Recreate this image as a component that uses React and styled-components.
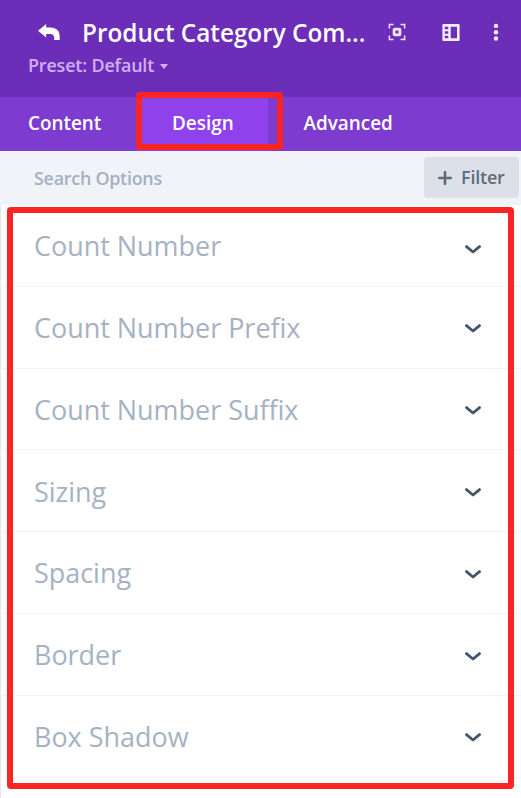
import React from 'react'
import styled, { createGlobalStyle } from 'styled-components'

const groups = [
    'Count Number',
    'Count Number Prefix',
    'Count Number Suffix',
    'Sizing',
    'Spacing',
    'Border',
    'Box Shadow',
]

const App = () => {
    return (
        <Panel>
            <GlobalStyle />
            <Header>
                <TitleRow>
                    <BackIcon viewBox="0 0 22 16">
                        <path d="M0 6.8 8.2 0V3.5H12.5C18.5 3.5 21.7 7 21.7 12.5V16H16.2V14C16.2 11.3 14.6 9.9 12 9.9H8.2V13.6Z" />
                    </BackIcon>
                    <Title>Product Category Com...</Title>
                    <Actions>
                        <FocusIcon viewBox="0 0 18 18">
                            <path d="M1.4 5.4V1.4H5.4M12.6 1.4H16.6V5.4M16.6 12.6V16.6H12.6M5.4 16.6H1.4V12.6" strokeWidth="1.5" />
                            <rect x="6.1" y="6.1" width="5.8" height="5.8" rx="0.6" strokeWidth="2.8" />
                        </FocusIcon>
                        <LayoutIcon viewBox="0 0 18 17">
                            <path
                                fillRule="evenodd"
                                d="M1.3 0H16.7Q17.6 0 17.6 1V16Q17.6 17 16.7 17H1.3Q.4 17 .4 16V1Q.4 0 1.3 0ZM8.7 2.8V14.2H15V2.8ZM2.8 2.8V5.2H6.3V2.8ZM2.8 7.2V9.7H6.3V7.2ZM2.8 11.7V14.2H6.3V11.7Z"
                            />
                        </LayoutIcon>
                        <DotsIcon viewBox="0 0 6 18">
                            <circle cx="3" cy="2.9" r="2.2" />
                            <circle cx="3" cy="9.2" r="2.2" />
                            <circle cx="3" cy="15.5" r="2.2" />
                        </DotsIcon>
                    </Actions>
                </TitleRow>
                <Preset>
                    Preset: Default
                    <Caret />
                </Preset>
            </Header>
            <Tabs>
                <Tab $width={137} $indent={28}>Content</Tab>
                <Tab $width={131} $indent={35} $active>
                    Design
                    <TabHighlight />
                </Tab>
                <Tab $width={160} $indent={35.5}>Advanced</Tab>
            </Tabs>
            <SearchBar>
                <Placeholder>Search Options</Placeholder>
                <FilterButton>
                    <PlusIcon viewBox="0 0 14 14">
                        <path d="M7 1.2V12.8M1.2 7H12.8" />
                    </PlusIcon>
                    <FilterLabel>Filter</FilterLabel>
                </FilterButton>
            </SearchBar>
            <Groups>
                {groups.map((name, i) => (
                    <Group key={name}>
                        <GroupName>{name}</GroupName>
                        <Chevron viewBox="0 0 16 9" $first={i === 0}>
                            <path d="M1.5 1.6 8 7 14.5 1.6" />
                        </Chevron>
                    </Group>
                ))}
                <GroupsHighlight />
            </Groups>
        </Panel>
    )
}

const GlobalStyle = createGlobalStyle`
body {
    margin: 0;
    background: #ffffff;
    font-family: "Open Sans", sans-serif;
}
`;

const Panel = styled.div`
box-sizing: border-box;
height: 798px;
display: flex;
flex-direction: column;
overflow: hidden;
box-shadow: inset 1px 0 0 #e6e6e8;
`;

const Header = styled.header`
box-sizing: border-box;
height: 97px;
padding: 14px 22px 0 28px;
background: #6c2eb9;
`;

const TitleRow = styled.div`
height: 36px;
display: flex;
align-items: center;
`;

const BackIcon = styled.svg`
width: 22px;
height: 16px;
margin-left: 10px;
fill: #ffffff;
`;

const Title = styled.div`
margin-left: 22px;
padding-top: 2px;
color: #ffffff;
font-size: 24.3px;
font-weight: 600;
line-height: 36px;
white-space: nowrap;
`;

const Actions = styled.div`
margin-left: auto;
display: flex;
align-items: center;
`;

const FocusIcon = styled.svg`
width: 18px;
height: 18px;
fill: none;
stroke: #efe4fc;
`;

const LayoutIcon = styled.svg`
width: 18px;
height: 17px;
margin-left: 36px;
fill: #f6effe;
`;

const DotsIcon = styled.svg`
width: 6px;
height: 18px;
margin-left: 33px;
fill: #f6effe;
`;

const Preset = styled.div`
display: flex;
align-items: center;
color: #d0b0f3;
font-size: 17.9px;
font-weight: 600;
letter-spacing: -0.15px;
line-height: 30px;
`;

const Caret = styled.span`
margin: 2px 0 0 6px;
border: 4px solid transparent;
border-top: 5px solid #d0b0f3;
border-bottom: 0;
`;

const Tabs = styled.nav`
height: 54px;
display: flex;
background: #7e3bd0;
`;

const Tab = styled.div`
box-sizing: border-box;
position: relative;
width: ${({ $width }) => $width}px;
padding-left: ${({ $indent }) => $indent}px;
background: ${({ $active }) => ($active ? '#8f42ec' : 'transparent')};
color: #ffffff;
font-size: 18.9px;
font-weight: 600;
line-height: 52px;
`;

const Highlight = styled.div`
box-sizing: border-box;
position: absolute;
z-index: 1;
border: 6px solid #f92424;
border-radius: 4px;
pointer-events: none;
`;

const TabHighlight = styled(Highlight)`
top: -5px;
left: -1px;
width: 147px;
height: 58px;
`;

const SearchBar = styled.div`
box-sizing: border-box;
height: 54px;
padding: 0 2px 1px 34px;
display: flex;
align-items: center;
justify-content: space-between;
background: #f0f3f8;
`;

const Placeholder = styled.div`
margin-top: 1px;
color: #a4b0c0;
font-size: 17.9px;
font-weight: 600;
letter-spacing: -0.25px;
`;

const FilterButton = styled.div`
box-sizing: border-box;
width: 95px;
height: 41px;
padding-left: 14px;
display: flex;
align-items: center;
gap: 9px;
border-radius: 4px;
background: #dce1e9;
color: #5f6b7c;
`;

const FilterLabel = styled.span`
padding-bottom: 2px;
font-size: 18px;
font-weight: 600;
letter-spacing: -0.2px;
`;

const PlusIcon = styled.svg`
width: 14px;
height: 14px;
fill: none;
stroke: #5f6b7c;
stroke-width: 2.6;
stroke-linecap: round;
`;

const Groups = styled.div`
position: relative;
height: 593px;
`;

const Group = styled.div`
box-sizing: border-box;
height: 81.8px;
padding: 0 40px 0 34px;
display: flex;
align-items: center;
justify-content: space-between;
border-bottom: 1px solid #f1f3f5;
`;

const GroupName = styled.div`
padding-top: 1.6px;
color: #a5b2c3;
font-size: 26.95px;
line-height: 40px;
`;

const Chevron = styled.svg`
width: 16px;
height: 9px;
margin-top: ${({ $first }) => ($first ? 9 : 3.4)}px;
fill: none;
stroke: #45556b;
stroke-width: 2.8;
stroke-linecap: round;
stroke-linejoin: round;
`;

const GroupsHighlight = styled(Highlight)`
top: 2px;
left: 7px;
width: 507px;
height: 582px;
`;

export default App
